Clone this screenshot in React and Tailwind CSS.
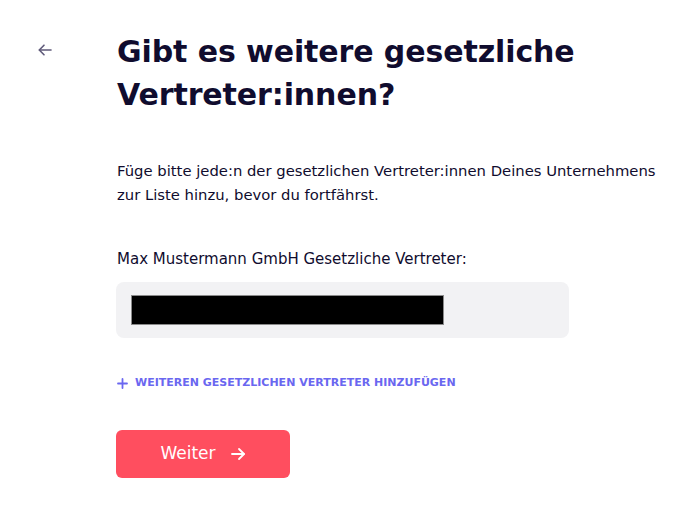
import React from "react";

export default function App() {
  return (
    <div className="min-h-[523px] w-[682px] bg-white text-[#100c2e]" style={{ fontFamily: "'DejaVu Sans', sans-serif" }}>
      <div className="flex pt-[30px]">
        <div className="w-[117px] shrink-0 pl-[37px] pt-[12px]">
          <svg width="16" height="16" viewBox="0 0 16 16" fill="none" stroke="#5f5a7a" strokeWidth="1.6" strokeLinecap="round" strokeLinejoin="round">
            <path d="M14 8H2.5" />
            <path d="M7 3.2L2.3 8L7 12.8" />
          </svg>
        </div>
        <div className="flex w-[560px] flex-col">
          <h1 className="w-[470px] text-[30px] font-bold leading-[43px] tracking-[-0.1px]">
            Gibt es weitere gesetzliche Vertreter:innen?
          </h1>
          <p className="mt-[43px] text-[14.8px] leading-[24px]">
            Füge bitte jede:n der gesetzlichen Vertreter:innen Deines Unternehmens zur Liste hinzu, bevor du fortfährst.
          </p>
          <p className="mt-[40px] text-[15px] leading-[24px]">Max Mustermann GmbH Gesetzliche Vertreter:</p>
          <div className="mt-[11px] -ml-px flex h-[56px] w-[453px] items-center rounded-lg bg-[#f2f2f4] pl-[15px]">
            <div className="h-[30px] w-[313px] border border-[#8a8a8a] bg-black" />
          </div>
          <button className="mt-[37px] flex items-center gap-[7px] self-start text-[11px] font-bold uppercase tracking-[0px] text-[#6a67f0]">
            <svg width="11" height="11" viewBox="0 0 11 11" stroke="#6a67f0" strokeWidth="1.8" strokeLinecap="round">
              <path d="M5.5 1v9M1 5.5h9" />
            </svg>
            Weiteren gesetzlichen Vertreter hinzufügen
          </button>
          <button className="mt-[38px] -ml-px flex h-[48px] w-[174px] items-center justify-center gap-[14px] rounded-md bg-[#ff4e5f] text-[17px] text-white">
            Weiter
            <svg width="16" height="16" viewBox="0 0 16 16" fill="none" stroke="white" strokeWidth="1.8" strokeLinecap="round" strokeLinejoin="round">
              <path d="M2 8h12" />
              <path d="M9 3l5 5-5 5" />
            </svg>
          </button>
        </div>
      </div>
    </div>
  );
}
